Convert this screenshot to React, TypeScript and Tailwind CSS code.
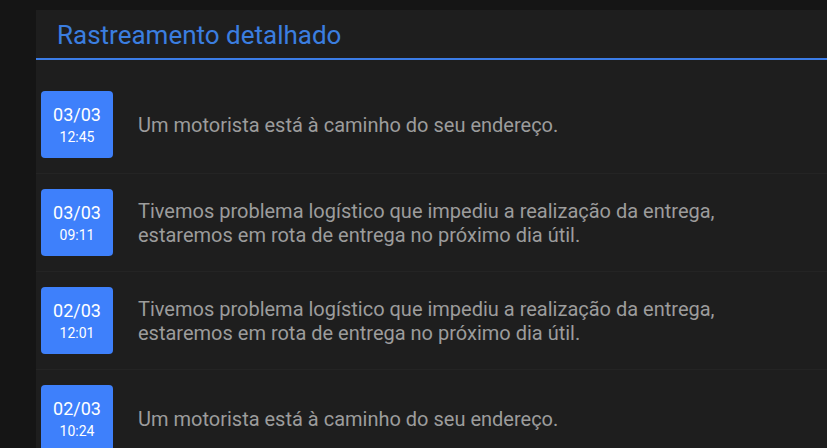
import React from "react";

const items = [
  { d: "03/03", t: "12:45", text: ["Um motorista está à caminho do seu endereço."] },
  {
    d: "03/03",
    t: "09:11",
    text: [
      "Tivemos problema logístico que impediu a realização da entrega,",
      "estaremos em rota de entrega no próximo dia útil.",
    ],
  },
  {
    d: "02/03",
    t: "12:01",
    text: [
      "Tivemos problema logístico que impediu a realização da entrega,",
      "estaremos em rota de entrega no próximo dia útil.",
    ],
  },
  { d: "02/03", t: "10:24", text: ["Um motorista está à caminho do seu endereço."] },
];

export default function App() {
  return (
    <div
      className="w-[827px] h-[448px] overflow-hidden bg-[#151515] pt-[10px] pl-[36px]"
      style={{ fontFamily: "Roboto, 'Noto Sans', sans-serif" }}
    >
      <div className="bg-[#1e1e1e] h-full w-[1000px]">
        <div className="h-[50px] border-b-2 border-[#3b7ce6] pl-[21px] flex items-center">
          <h1 className="text-[26px] leading-[30px] text-[#3b7ee0] pt-[1px]">Rastreamento detalhado</h1>
        </div>
        <div className="pt-[16px]">
          {items.map((it, i) => (
            <div
              key={i}
              className="flex items-center py-[15px] pl-[5px] border-b border-[#242424]"
            >
              <div className="w-[72px] h-[67px] rounded-[4px] bg-[#3e80fb] flex flex-col items-center justify-center text-white shrink-0">
                <div className="text-[18px] leading-[22px]">{it.d}</div>
                <div className="text-[14px] leading-[18px] mt-[2px]">{it.t}</div>
              </div>
              <div className="ml-[25px] text-[20px] leading-[24px] text-[#9c9c9c]">
                {it.text.map((l, j) => (
                  <div key={j}>{l}</div>
                ))}
              </div>
            </div>
          ))}
        </div>
      </div>
    </div>
  );
}
